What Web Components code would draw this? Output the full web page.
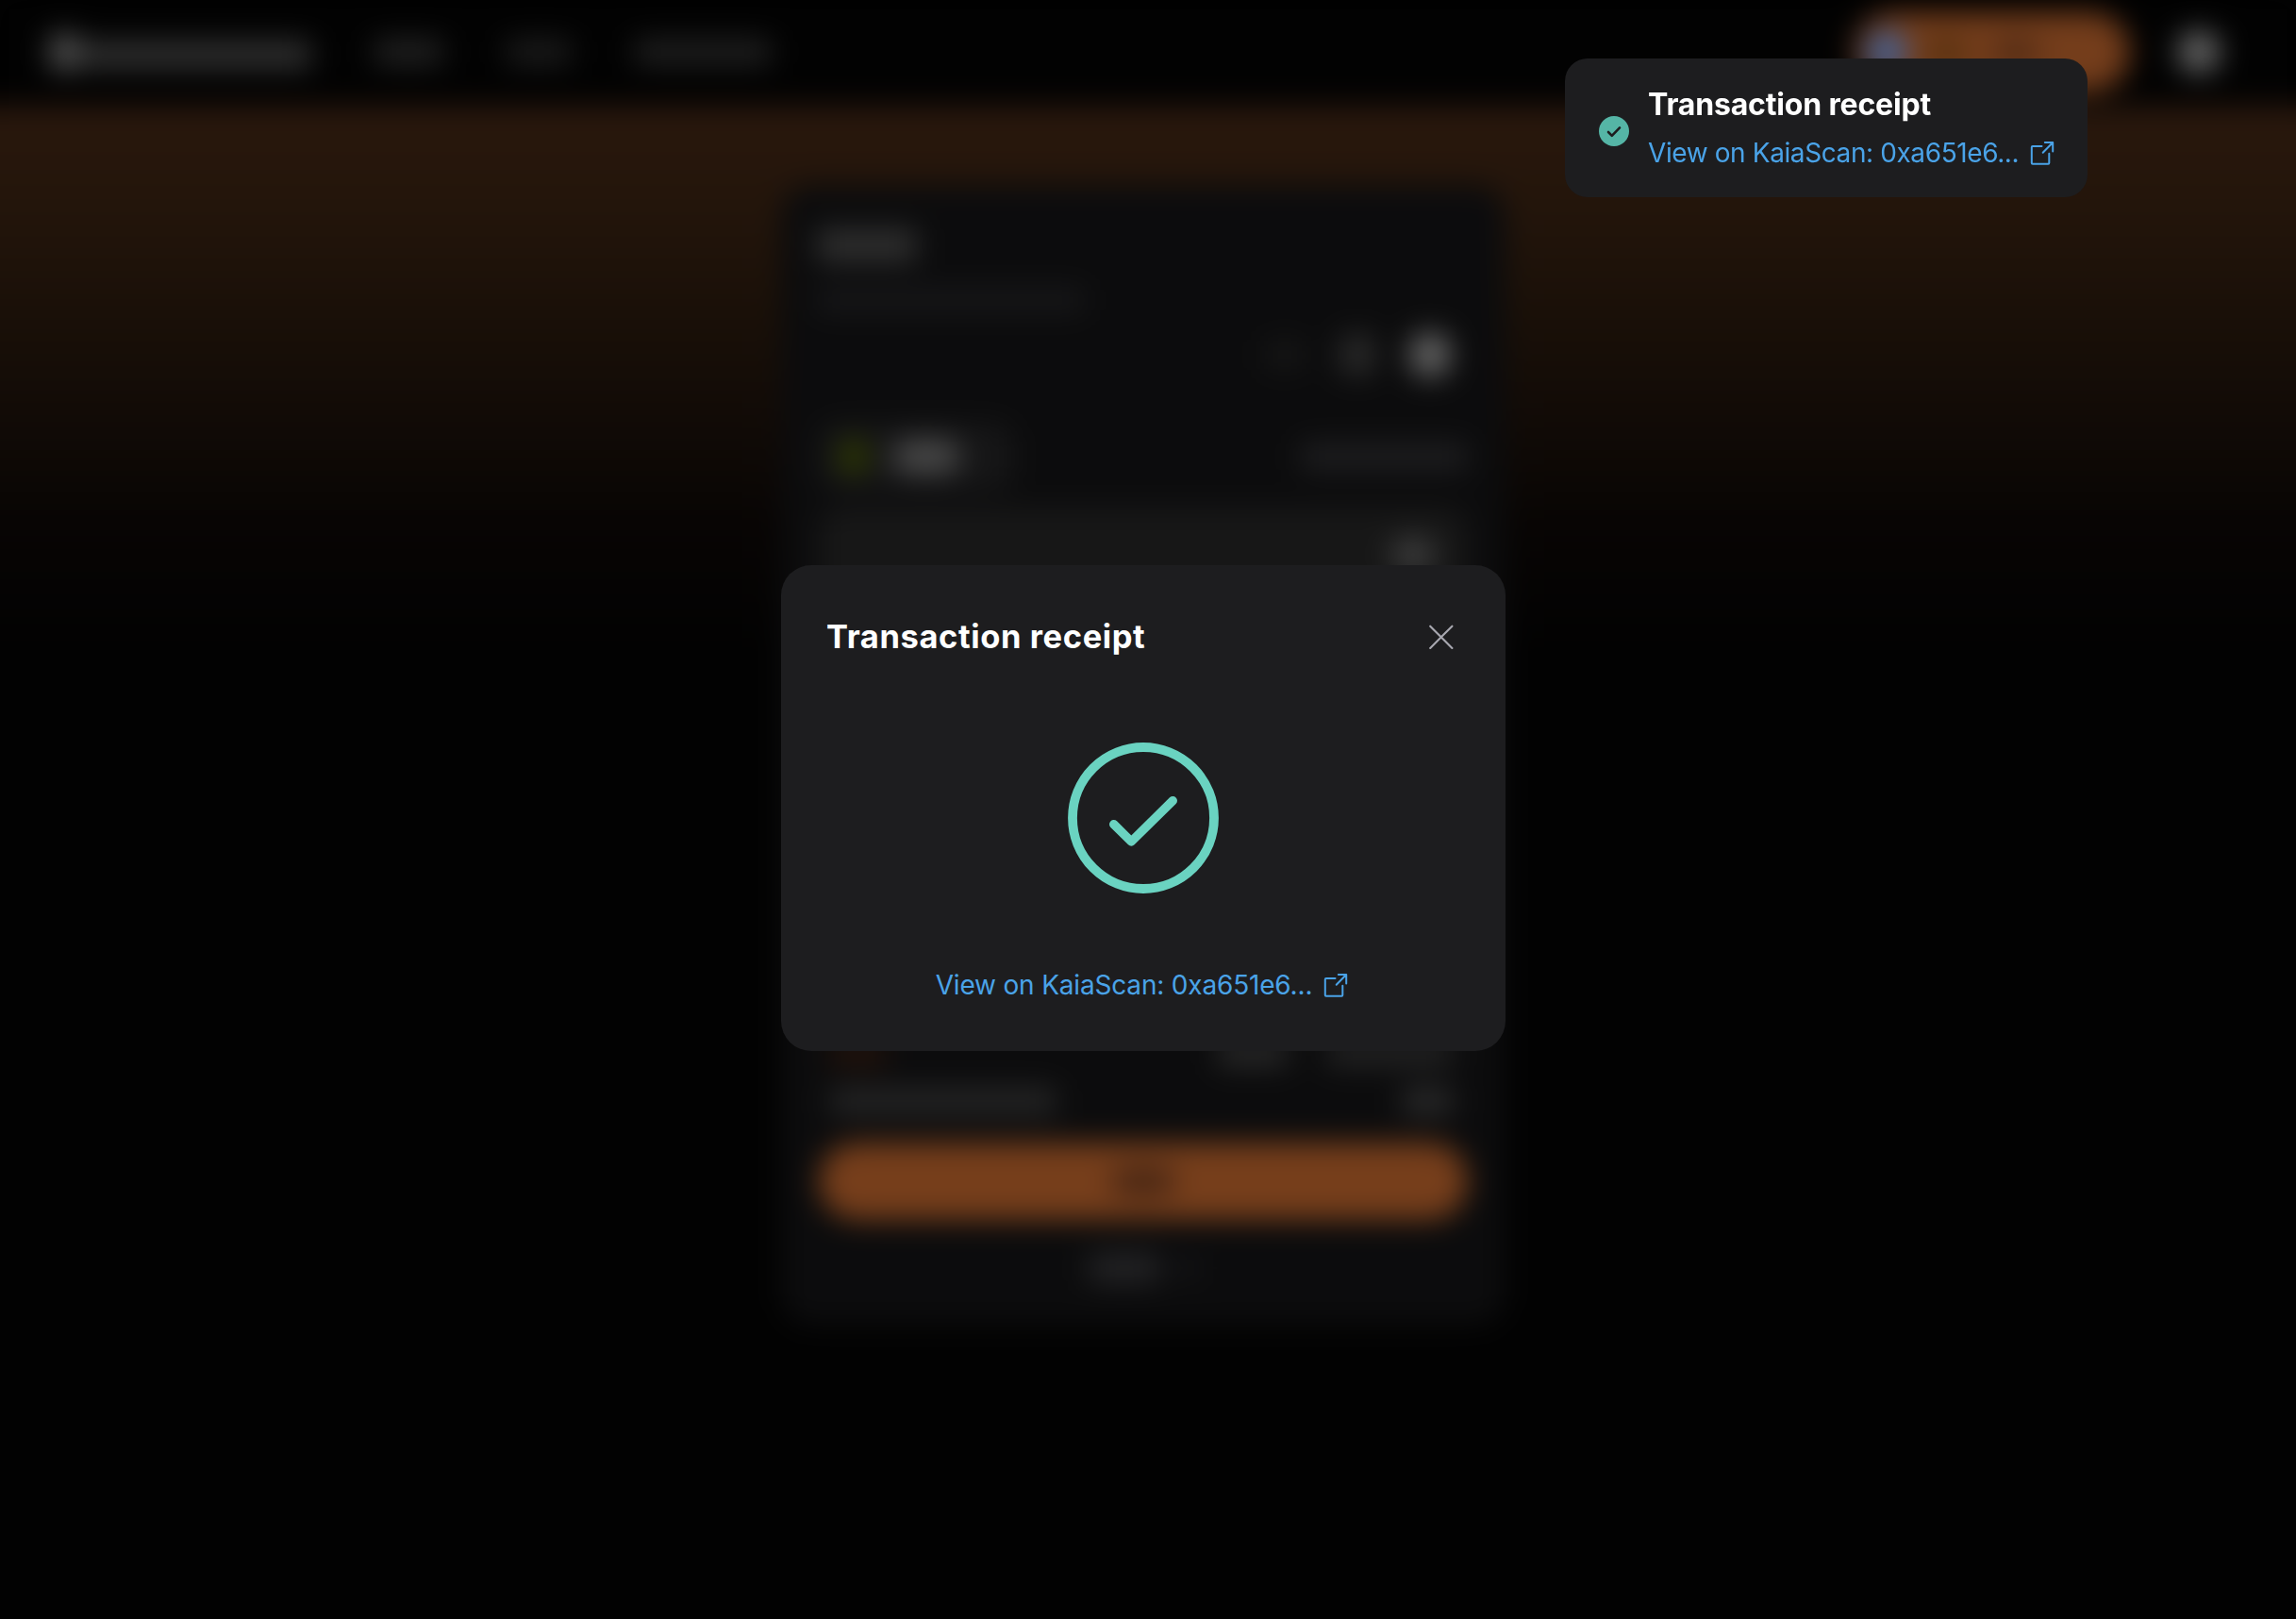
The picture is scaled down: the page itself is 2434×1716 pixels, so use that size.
<!DOCTYPE html>
<html lang="en">
<head>
<meta charset="utf-8">
<title>Transaction receipt</title>
<style>
html,body{margin:0;height:100%;background:#020202}
body{overflow:hidden;font-family:Inter,"Liberation Sans",sans-serif;color:#fff}
</style>
</head>
<body>
<app-shell>
  <top-nav slot="nav"></top-nav>
  <swap-card></swap-card>
</app-shell>
<modal-overlay>
  <receipt-dialog heading="Transaction receipt">
    <scan-link style="--track:-.18px">View on KaiaScan: 0xa651e6...</scan-link>
  </receipt-dialog>
</modal-overlay>
<toast-message heading="Transaction receipt">
  <scan-link style="--track:-.4px">View on KaiaScan: 0xa651e6...</scan-link>
</toast-message>
<script>
function define(name, html, setup) {
  const t = document.createElement('template');
  t.innerHTML = html;
  customElements.define(name, class extends HTMLElement {
    connectedCallback() {
      if (this.shadowRoot) return;
      this.attachShadow({mode: 'open'}).append(t.content.cloneNode(true));
      if (setup) setup(this, this.shadowRoot);
    }
  });
}

const setHeading = (el, root) => { root.querySelector('h2').textContent = el.getAttribute('heading'); };

/* Soft block: w, h, c (colour) and optional r (radius) */
define('soft-block', `<style>
:host{display:flex;flex:none;align-items:center;justify-content:center;box-sizing:border-box;
width:var(--w);height:var(--h);background:var(--c);border-radius:var(--r,6px)}
</style><slot></slot>`, el => {
  for (const k of ['w', 'h', 'c', 'r']) {
    const v = el.getAttribute(k);
    if (v) el.style.setProperty('--' + k, k === 'c' ? v : v + 'px');
  }
});

/* The page behind the dialog is blurred; its background runs past the sides so that they stay opaque */
define('app-shell', `<style>
:host{display:flex;flex-direction:column;height:1716px;background:#020202;filter:blur(15px)}
main{flex:1;box-sizing:border-box;margin:0 -64px;padding:84px 0 0 892px;
background:linear-gradient(#2a180d 0,#23150b 110px,#1a1008 220px,#100a06 350px,#080504 440px,#020202 580px)}
</style><slot name="nav"></slot><main><slot></slot></main>`);

define('top-nav', `<style>
:host{display:flex;align-items:center;box-sizing:border-box;height:112px;padding:0 80px 2px 52px;background:#020202}
.links{display:flex;gap:66px;margin-left:66px}
.right{display:flex;align-items:center;gap:50px;margin-left:auto}
.wallet{justify-content:flex-start;padding-left:12px}
</style>
<soft-block w="32" h="42" c="#505050" r="16"></soft-block>
<soft-block w="246" h="30" c="#303030" style="margin-top:5px"></soft-block>
<div class="links">
<soft-block w="74" h="28" c="#212121"></soft-block>
<soft-block w="70" h="28" c="#1b1b1b"></soft-block>
<soft-block w="146" h="28" c="#1f1f1f"></soft-block></div>
<div class="right">
<soft-block class="wallet" w="292" h="84" c="#743d1b" r="42">
<soft-block w="44" h="46" c="#425d8e" r="22"></soft-block>
<soft-block w="44" h="26" c="#55300f" style="margin-left:20px"></soft-block>
<soft-block w="50" h="26" c="#502a14" style="margin-left:26px"></soft-block></soft-block>
<soft-block w="46" h="46" c="#606060" r="22"></soft-block></div>`);

define('swap-card', `<style>
:host{display:flex;flex-direction:column;box-sizing:border-box;width:768px;height:1208px;padding:48px 40px 0;
background:#0c0c0d;border-radius:32px}
.row{display:flex;align-items:center;justify-content:space-between;flex:none}
.tools{justify-content:flex-end;gap:36px;margin-top:22px;height:50px;padding-right:18px}
.pick{margin-top:47px;height:72px}
.token{justify-content:flex-start;gap:26px;padding-left:22px}
.input{justify-content:flex-end;padding-right:34px;margin-top:18px}
.info{height:32px;padding:0 16px 0 12px}
.pair{display:flex;gap:40px}
</style>
<soft-block w="106" h="36" c="#2e2e2e" style="margin:-2px 0 -2px -2px"></soft-block>
<soft-block w="284" h="26" c="#171719" style="margin:29px 0 -2px -2px"></soft-block>
<div class="row tools">
<soft-block w="44" h="32" c="#151515"></soft-block>
<soft-block w="38" h="44" c="#282828" r="10"></soft-block>
<soft-block w="44" h="48" c="#626262" r="22"></soft-block></div>
<div class="row pick">
<soft-block class="token" w="206" h="72" c="#161617" r="20">
<soft-block w="30" h="38" c="#2c3700" r="14"></soft-block>
<soft-block w="72" h="36" c="#484848"></soft-block></soft-block>
<soft-block w="178" h="30" c="#1d1d1f"></soft-block></div>
<soft-block class="input" w="688" h="100" c="#171717" r="24">
<soft-block w="48" h="38" c="#3a3a3a"></soft-block></soft-block>
<div style="flex:none;height:462px"></div>
<div class="row info"><soft-block w="60" h="26" c="#24130b"></soft-block>
<div class="pair"><soft-block w="76" h="28" c="#282828"></soft-block><soft-block w="134" h="28" c="#232323"></soft-block></div></div>
<div class="row info" style="margin-top:19px"><soft-block w="240" h="28" c="#252525"></soft-block>
<soft-block w="54" h="28" c="#2a2a2a"></soft-block></div>
<soft-block w="688" h="82" c="#763e1b" r="41" style="margin-top:28px">
<soft-block w="68" h="30" c="#472614"></soft-block></soft-block>
<div class="row" style="justify-content:center;gap:18px;margin-top:36px">
<soft-block w="76" h="30" c="#242426"></soft-block><soft-block w="22" h="20" c="#17171a"></soft-block></div>`);

define('modal-overlay', `<style>
:host{position:fixed;inset:0;display:flex;align-items:flex-start;justify-content:flex-start;box-sizing:border-box;
padding:599px 0 0 828px}
</style><slot></slot>`);

define('receipt-dialog', `<style>
:host{display:flex;flex-direction:column;box-sizing:border-box;width:768px;height:515px;padding:48px;
background:#1d1d1f;border-radius:32px}
header{display:flex;align-items:center;justify-content:space-between;height:56px}
h2{margin:0;font-size:34.5px;line-height:50px;font-weight:700;letter-spacing:.6px}
.ok{display:block;margin:84px auto 0;flex:none}
.foot{display:flex;justify-content:center;margin-top:76px}
</style>
<header><h2></h2><svg width="40" height="40" viewBox="0 0 40 40" fill="none" stroke="#a8a8b0" stroke-width="2.1" stroke-linecap="round"><path d="M8.2 8.7 31.4 31.9M31.4 8.7 8.2 31.9"/></svg></header>
<svg class="ok" width="160" height="160" viewBox="0 0 160 160" fill="none" stroke="#6ad3c1" stroke-linecap="round" stroke-linejoin="round"><circle cx="80" cy="80" r="75" stroke-width="9.8"/><path stroke-width="9.4" d="M48.7 86.7 67.3 105 111.3 61.7"/></svg>
<div class="foot"><slot></slot></div>`, setHeading);

define('scan-link', `<style>
:host{display:flex;align-items:center;gap:9px;font-size:28px;line-height:42px;color:#4aa3e8;white-space:nowrap}
span{letter-spacing:var(--track,0)}
svg{flex:none}
</style>
<span><slot></slot></span>
<svg width="32" height="32" viewBox="0 0 32 32" fill="none" stroke="currentColor" stroke-width="2" stroke-linecap="round" stroke-linejoin="round" style="margin-top:-1px"><path d="M18.8 5H27.2V14.6M27 5.2 16.7 15.7M15.5 9H5.8Q4.8 9 4.8 10V26.7Q4.8 27.7 5.8 27.7H22.3Q23.3 27.7 23.3 26.7V16.8"/></svg>`);

define('toast-message', `<style>
:host{position:fixed;top:62px;right:221px;display:flex;align-items:flex-start;gap:20px;box-sizing:border-box;
width:554px;height:147px;padding:25px 32px 22px 36px;background:#1d1d1f;border-radius:24px}
.mark{flex:none;margin-top:36px}
.body{display:flex;flex-direction:column;gap:6px}
h2{margin:0;font-size:32px;line-height:48px;font-weight:700;letter-spacing:-.17px;white-space:nowrap}
</style>
<svg class="mark" width="32" height="32" viewBox="0 0 32 32"><circle cx="16" cy="16" r="16" fill="#55b5a6"/><path d="M10 17 13.8 20.8 22 12.4" fill="none" stroke="#1d1d1f" stroke-width="2.6" stroke-linecap="round" stroke-linejoin="round"/></svg>
<div class="body"><h2></h2><slot></slot></div>`, setHeading);
</script>
</body>
</html>
